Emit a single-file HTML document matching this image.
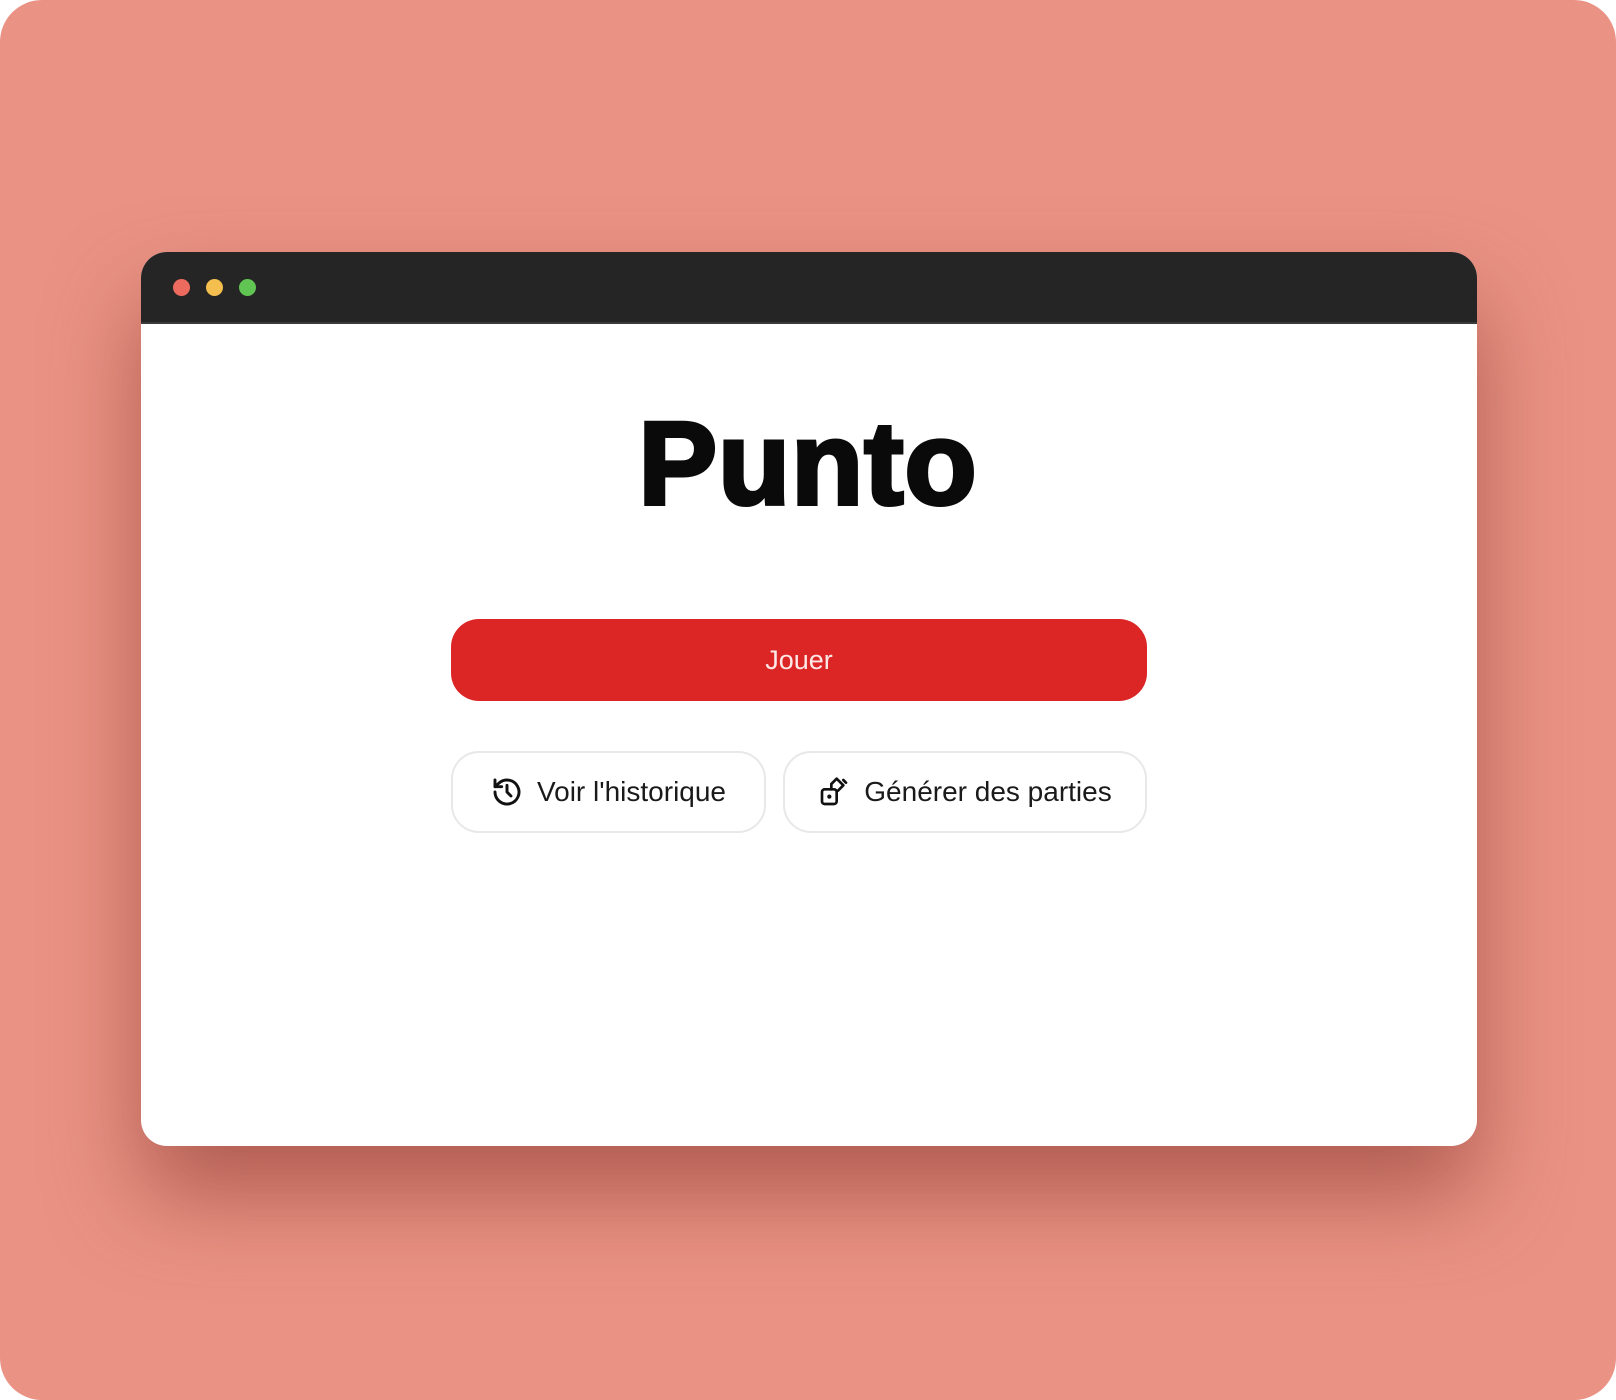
<!DOCTYPE html>
<html><head><style>
html,body{margin:0;padding:0;width:1616px;height:1400px;background:#fff;overflow:hidden}
.bg{position:absolute;left:0;top:0;width:1616px;height:1400px;background:#ea9385;border-radius:42px;overflow:hidden}
.win{position:absolute;left:141px;top:252px;width:1336px;height:894px;background:#fff;border-radius:26px;overflow:hidden;box-shadow:0 50px 90px rgba(120,40,30,.5)}
.bar{height:70px;background:#252525;border-bottom:2px solid #3a3a3a;position:relative}
.dot{position:absolute;top:27px;width:17px;height:17px;border-radius:50%}
h1{position:absolute;left:0;width:100%;top:405px;margin:0;text-align:center;font:bold 118px/1 "Liberation Sans",sans-serif;color:#0a0a0a;letter-spacing:1px;-webkit-text-stroke:4px #0a0a0a}
.btn{position:absolute;box-sizing:border-box;font-family:"Liberation Sans",sans-serif;display:flex;align-items:center;justify-content:center}
.red{left:451px;top:619px;width:696px;height:82px;background:#dc2626;border-radius:28px;color:#fde8e8;font-size:27px}
.w{top:751px;height:82px;border:2px solid #e8e8e8;border-radius:28px;background:#fff;color:#1a1a1a;font-size:28px;gap:14px}
</style></head><body>
<div class="bg">
<div class="win"><div class="bar">
<div class="dot" style="left:32px;background:#ec6a5e"></div>
<div class="dot" style="left:65px;background:#f4bf4f"></div>
<div class="dot" style="left:98px;background:#61c554"></div>
</div></div>
<h1>Punto</h1>
<div class="btn red">Jouer</div>
<div class="btn w" style="left:451px;width:315px">
<svg width="32" height="32" viewBox="0 0 24 24" fill="none" stroke="#111" stroke-width="2.2" stroke-linecap="round" stroke-linejoin="round"><path d="M3 12a9 9 0 1 0 3-6.7L3 8"/><path d="M3 3v5h5"/><path d="M12 7v5l3 3"/></svg>Voir l'historique</div>
<div class="btn w" style="left:783px;width:364px">
<svg width="32" height="32" viewBox="0 0 24 24" fill="none" stroke="#111" stroke-width="2" stroke-linecap="round" stroke-linejoin="round"><rect x="3" y="10" width="11" height="11" rx="2"/><path d="M10 10V6l4-4 5 5-4 4"/><circle cx="8.5" cy="15.5" r=".6" fill="#111"/><path d="M19 3l2 2"/></svg>Générer des parties</div>
</div>
</body></html>
